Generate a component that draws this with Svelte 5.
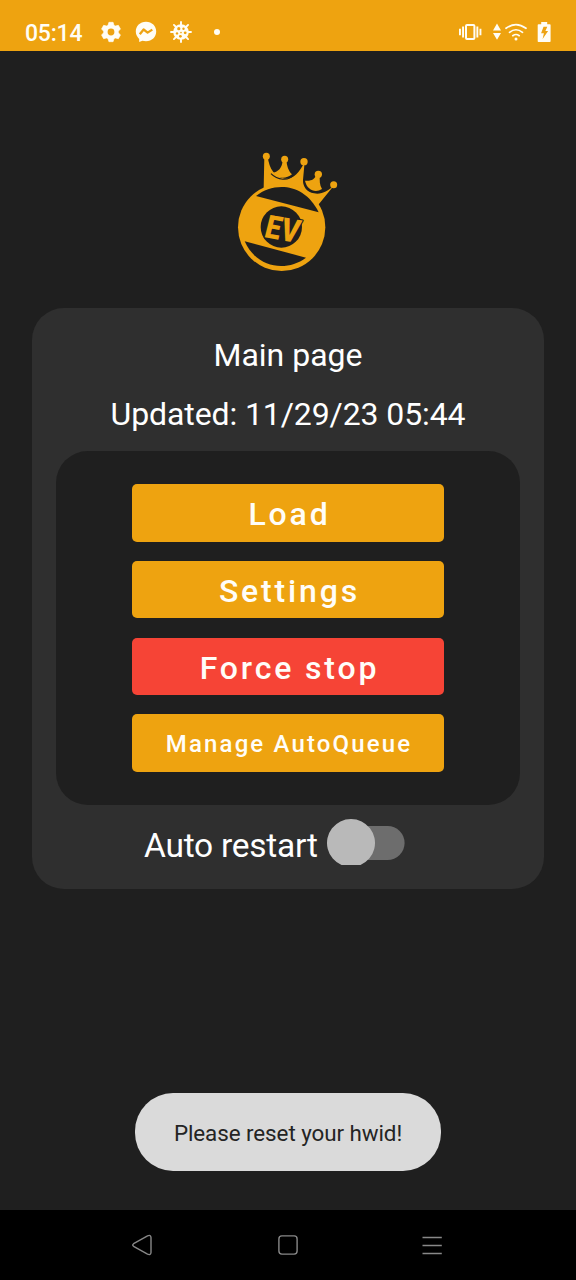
<script>
  const actions = [
    { label: 'Load', kind: '' },
    { label: 'Settings', kind: '' },
    { label: 'Force stop', kind: 'danger' },
    { label: 'Manage AutoQueue', kind: 'small' }
  ];
  const teeth = [0, 60, 120, 180, 240, 300];
  const spikes = [0, 45, 90, 135, 180, 225, 270, 315];
</script>

<div class="screen">
  <header class="status">
    <span class="clock">05:14</span>
    <svg class="gear" width="22" height="22" viewBox="-11 -11 22 22" fill="#fffdf5">
      {#each teeth as a}
        <path d="M-3.200 -6 L-2.100 -9.700 H2.100 L3.200 -6 Z" stroke="#fffdf5" stroke-width=".6" stroke-linejoin="round" transform={`rotate(${a})`} />
      {/each}
      <circle r="5.500" fill="none" stroke="#fffdf5" stroke-width="4.200" />
    </svg>
    <svg class="messenger" width="22" height="22" viewBox="0 0 22 22">
      <path d="M11 .8C5 .8 .8 5.100 .8 10.600c0 3 1.300 5.500 3.400 7.300v3.200l3.200-1.300c1.100.3 2.300.5 3.600.5 6 0 10.200-4.200 10.200-9.700S17 .8 11 .8Z" fill="#fffdf5" />
      <path d="m4.800 13.300 3.800-4.800 4 3.100 4.700-3" fill="none" stroke="#eea310" stroke-width="2.300" stroke-linejoin="round" />
    </svg>
    <svg class="virus" width="24" height="24" viewBox="-12 -12 24 24">
      <g stroke="#fffdf5" stroke-width="1.900" stroke-linecap="round">
        {#each spikes as a}
          <path d="M0 -6V-10" transform={`rotate(${a})`} />
        {/each}
      </g>
      <circle r="7.800" fill="#fffdf5" />
      <g fill="#eea310">
        <circle cx="-2.200" cy="-3.300" r="1.600" /><circle cx="2.500" cy="-3.300" r="1.200" />
        <circle cx="-4" cy="1.400" r="1.200" /><circle cx="0" cy=".6" r=".8" />
        <circle cx="4.200" cy=".8" r="1.400" /><circle cx="-.6" cy="4.300" r="1.400" />
      </g>
    </svg>
    <span class="dot"></span>
    <svg class="system" width="96" height="24" viewBox="0 0 96 24" fill="#fffdf5">
      <rect x="9" y="5" width="8.400" height="14" rx="1" fill="none" stroke="#fffdf5" stroke-width="2" />
      <path d="M5.100 6.500h1.900v11H5.100zM2 8.700h1.900v6.600H2zM19.400 6.500h1.900v11h-1.900zM22.500 8.700h1.900v6.600h-1.900z" />
      <path d="M36 10.600h8L40 3.500zM36 13h8l-4 6.800z" />
      <g fill="none" stroke="#fffdf5" stroke-width="1.700" stroke-linecap="round">
        <path d="M49 8.300Q59 .8 69 8.300M52.500 12.300Q59 7.200 65.500 12.300M55.800 15.700Q59 13.300 62.200 15.700" />
      </g>
      <circle cx="59" cy="18.900" r="1.500" />
      <path d="M81.500 4.200h2.700V2h6v2.200h2.600q.8 0 .8.800v16.200q0 .8-.8.800H81.500q-.8 0-.8-.8V5q0-.8.800-.8Z" />
      <path d="M86.500 6.800h3.800l-1.900 4.200h2.700l-5.500 8 1.300-5.800h-2.800z" fill="#eea310" />
    </svg>
  </header>

  <main>
    <svg class="logo" width="130" height="140" viewBox="0 0 390 420" fill="#eea310">
      <path d="M133 50 131 145 292 198 343 135C325 153 303 165 282 160C261 156 249 142 249 120L254 65C239 98 219 118 194 116C166 112 147 88 143 48Z" />
      <path d="M155 99C175 96 187 84 188 60H199C201 79 205 92 216 103C199 117 174 117 155 99Z" />
      <path d="M255 122C273 124 285 119 289 103H300C298 121 299 136 306 147C286 160 261 150 255 122Z" />
      <path d="M153 101C172 121 206 124 221 105M252 121C252 151 284 166 309 150" fill="none" stroke="#1f1f1f" stroke-width="3.500" />
      <circle cx="139" cy="49" r="10.500" /><circle cx="194" cy="58" r="10.500" />
      <circle cx="252" cy="65" r="11" /><circle cx="295" cy="103" r="11" /><circle cx="341" cy="134" r="10.500" />
      <circle cx="185" cy="262" r="131" />
      <g fill="#1f1f1f">
        <path d="M108 168C164 124 254 130 296 217Z" />
        <path d="M74 304 258 353C197 398 109 383 74 304Z" />
        <circle cx="184" cy="261" r="62" />
      </g>
      <text class="mark" transform="translate(130 291) rotate(10) skewX(-4)" textLength="102" lengthAdjust="spacingAndGlyphs">EV</text>
    </svg>

    <section class="card">
      <h1>Main page</h1>
      <p class="updated">Updated: 11/29/23 05:44</p>
      <div class="panel">
        {#each actions as action}
          <button class={action.kind}>{action.label}</button>
        {/each}
      </div>
      <div class="restart">
        <span>Auto restart</span>
        <svg width="80" height="48" viewBox="0 0 80 48">
          <rect x="8" y="8" width="70.600" height="34" rx="17" fill="#6d6d6d" />
          <path d="M15.500 47A24 24 0 1 1 34.500 47Z" fill="#b9b9b9" />
        </svg>
      </div>
    </section>

    <div class="toast">Please reset your hwid!</div>
  </main>

  <nav>
    <svg class="back" width="24" height="24" viewBox="0 0 24 24"><path d="M3.600 10.700 17.500 2.800Q20.800 1.400 21 4.500V19.500Q20.800 22.600 17.500 21.200L3.600 13.300Q1.800 12 3.600 10.700Z" /></svg>
    <svg width="24" height="24" viewBox="0 0 24 24"><rect x="2.900" y="2.900" width="18.200" height="18.200" rx="3" /></svg>
    <svg width="24" height="24" viewBox="0 0 24 24"><path d="M2.500 4.500h19.300M2.500 12.500h19.300M2.500 20.500h19.300" /></svg>
  </nav>
</div>

<style>
  :global(body) { margin: 0; background: #1f1f1f; }
  .screen {
    width: 576px;
    height: 1280px;
    display: flex;
    flex-direction: column;
    overflow: hidden;
    background: #1f1f1f;
    color: #fff;
    font-family: Roboto, sans-serif;
  }
  .status {
    height: 51px;
    box-sizing: border-box;
    padding: 13px 23px 0 25px;
    display: flex;
    align-items: center;
    background: #eea310;
    color: #fffdf5;
  }
  .clock { width: 75px; padding-top: 3px; font-size: 23px; font-weight: 500; line-height: 35px; letter-spacing: -.2px; }
  .gear { margin-right: 13px; }
  .messenger { margin-right: 12px; }
  .virus { margin-right: 21px; }
  .dot { width: 6px; height: 6px; border-radius: 50%; background: #fffdf5; }
  .system { margin-left: auto; }
  main {
    flex: 1;
    display: flex;
    flex-direction: column;
    align-items: center;
    padding-top: 89px;
  }
  .logo { margin-right: 6px; }
  .mark {
    font: 900 97px Roboto, sans-serif;
    stroke: #1f1f1f;
    stroke-width: 7;
    stroke-linejoin: round;
    paint-order: stroke;
  }
  .card {
    width: 512px;
    height: 581px;
    box-sizing: border-box;
    margin-top: 28px;
    padding: 27px 24px 0;
    border-radius: 32px;
    background: #2f2f2f;
    text-align: center;
  }
  h1, .updated { margin: 0; font-size: 32px; font-weight: 400; line-height: 40px; }
  .updated { margin-top: 19px; letter-spacing: -.1px; }
  .panel {
    height: 354px;
    box-sizing: border-box;
    margin-top: 17px;
    padding-top: 33px;
    border-radius: 32px;
    background: #1f1f1f;
    display: flex;
    flex-direction: column;
    align-items: center;
    gap: 19.200px;
  }
  button {
    width: 312px;
    height: 57.600px;
    flex: none;
    border: 0;
    border-radius: 5px;
    padding: 3px 0 0 3px;
    background: #eea310;
    color: #fffdf8;
    font: 500 32px Roboto, sans-serif;
    letter-spacing: 2.850px;
  }
  .danger { background: #f64436; }
  .small { padding: 2px 0 0 2px; font-size: 24px; letter-spacing: 2.140px; }
  .restart {
    display: flex;
    align-items: flex-start;
    margin: 13px 0 0 88px;
    font-size: 33.500px;
    line-height: 56px;
  }
  .restart span { width: 182px; text-align: left; white-space: nowrap; letter-spacing: -.25px; }
  .toast {
    width: 306px;
    height: 78px;
    margin: auto 0 39px;
    border-radius: 38px;
    background: #dadada;
    color: #242424;
    font-size: 22.400px;
    line-height: 80px;
    letter-spacing: -.07px;
    text-align: center;
  }
  nav {
    height: 70px;
    background: #000;
    display: flex;
    align-items: center;
    justify-content: center;
    gap: 120px;
  }
  nav svg { fill: none; stroke: #888; stroke-width: 1.400; }
  .back { margin: 0 2px 0 -2px; }
</style>
